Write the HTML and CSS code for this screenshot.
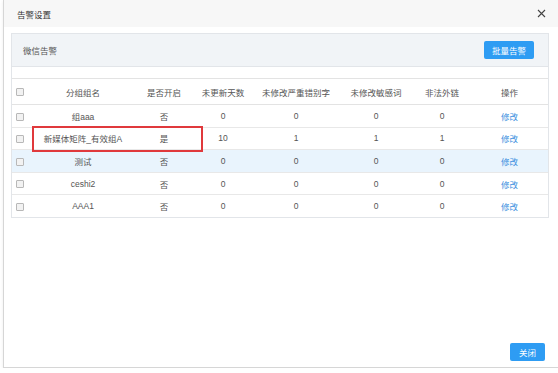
FILE: index.html
```html
<!DOCTYPE html>
<html lang="zh-CN">
<head>
<meta charset="UTF-8"/>
<meta name="viewport" content="width=device-width, initial-scale=1.0"/>
<title>告警设置</title>
<link rel="stylesheet" href="styles.css">
</head>
<body>
  <div class="modal">
    <div class="modal-head">
      <span class="modal-title">告警设置</span>
      <svg class="close" width="9" height="9" viewBox="0 0 9 9"><path d="M1 1L8 8M8 1L1 8" stroke="#444" stroke-width="1.1" fill="none"/></svg>
    </div>

    <div class="modal-body">
      <div class="panel">
        <div class="panel-head">
          <span>微信告警</span>
          <button class="btn">批量告警</button>
        </div>
        <div class="panel-gap"></div>
        <table class="grid">
          <colgroup>
            <col style="width:19px"><col style="width:104px"><col style="width:58px"><col style="width:60px">
            <col style="width:86px"><col style="width:74px"><col style="width:58px"><col>
          </colgroup>
          <thead>
            <tr>
              <th class="cb-cell"><span class="cb"></span></th>
              <th>分组组名</th><th>是否开启</th><th>未更新天数</th><th>未修改严重错别字</th>
              <th>未修改敏感词</th><th>非法外链</th><th>操作</th>
            </tr>
          </thead>
          <tbody>
            <tr>
              <td class="cb-cell"><span class="cb"></span></td>
              <td>组aaa</td><td>否</td><td>0</td><td>0</td><td>0</td><td>0</td><td><a class="link">修改</a></td>
            </tr>
            <tr>
              <td class="cb-cell"><span class="cb"></span></td>
              <td>新媒体矩阵_有效组A</td><td>是</td><td>10</td><td>1</td><td>1</td><td>1</td><td><a class="link">修改</a></td>
            </tr>
            <tr class="hover">
              <td class="cb-cell"><span class="cb"></span></td>
              <td>测试</td><td>否</td><td>0</td><td>0</td><td>0</td><td>0</td><td><a class="link">修改</a></td>
            </tr>
            <tr>
              <td class="cb-cell"><span class="cb"></span></td>
              <td>ceshi2</td><td>否</td><td>0</td><td>0</td><td>0</td><td>0</td><td><a class="link">修改</a></td>
            </tr>
            <tr>
              <td class="cb-cell"><span class="cb"></span></td>
              <td>AAA1</td><td>否</td><td>0</td><td>0</td><td>0</td><td>0</td><td><a class="link">修改</a></td>
            </tr>
          </tbody>
        </table>
        <div class="mark"></div>
      </div>
    </div>

    <div class="modal-foot">
      <button class="btn">关闭</button>
    </div>
  </div>
</body>
</html>
```

FILE: styles.css
```css
html, body { margin: 0; overflow: hidden; background: #fff; }
body { font-family: "Liberation Sans", "Noto Sans CJK SC", sans-serif; font-size: 8.5px; color: #555; }

.modal { margin-left: 3px; width: 555px; height: 368px; box-sizing: border-box; border-left: 1px solid #d6d6d6; border-bottom: 1px solid #d6d6d6; display: flex; flex-direction: column; box-shadow: 0 1px 3px rgba(0,0,0,0.08); }
.modal-head { height: 27px; flex: none; background: #f7f7f7; display: flex; align-items: center; justify-content: space-between; padding: 0 12px 0 13px; }
.modal-title { color: #333; font-size: 8.5px; }
.close { display: block; }

.modal-body { flex: 1; padding: 6px 9px 0 7px; }
.panel { position: relative; border: 1px solid #e2e5e9; }
.panel-head { height: 32px; background: #f1f4f7; border-bottom: 1px solid #e2e5e9; display: flex; align-items: center; justify-content: space-between; padding: 0 14px 0 11px; color: #555; }
.panel-gap { height: 11px; }

.btn { background: #2e9cf3; color: #fff; border: none; border-radius: 2px; font-family: inherit; font-size: 8.5px; height: 18px; padding: 0 8px; }

.grid { width: 100%; border-collapse: collapse; table-layout: fixed; }
.grid th, .grid td { text-align: center; padding: 0; font-weight: normal; white-space: nowrap; }
.grid th { height: 25px; border-top: 1px solid #e3e3e3; border-bottom: 1px solid #e3e3e3; color: #555; }
.grid td { height: 21.6px; border-bottom: 1px solid #e8e8e8; }
.grid tbody tr:last-child td { border-bottom: none; }
.grid .hover td { background: #e9f4fd; }
.cb-cell { text-align: left !important; padding-left: 4px !important; }
.cb { display: inline-block; width: 6px; height: 6px; border: 1px solid #b8b8b8; border-radius: 1px; background: #f2f2f2; vertical-align: middle; }
.link { color: #3b8fe0; }

.mark { position: absolute; left: 20px; top: 92px; width: 171px; height: 26px; box-sizing: border-box; border: 2px solid #e0393c; }

.modal-foot { flex: none; display: flex; justify-content: flex-end; padding: 0 13px 6px 0; }
.modal-foot .btn { width: 35px; padding: 0; }
```
